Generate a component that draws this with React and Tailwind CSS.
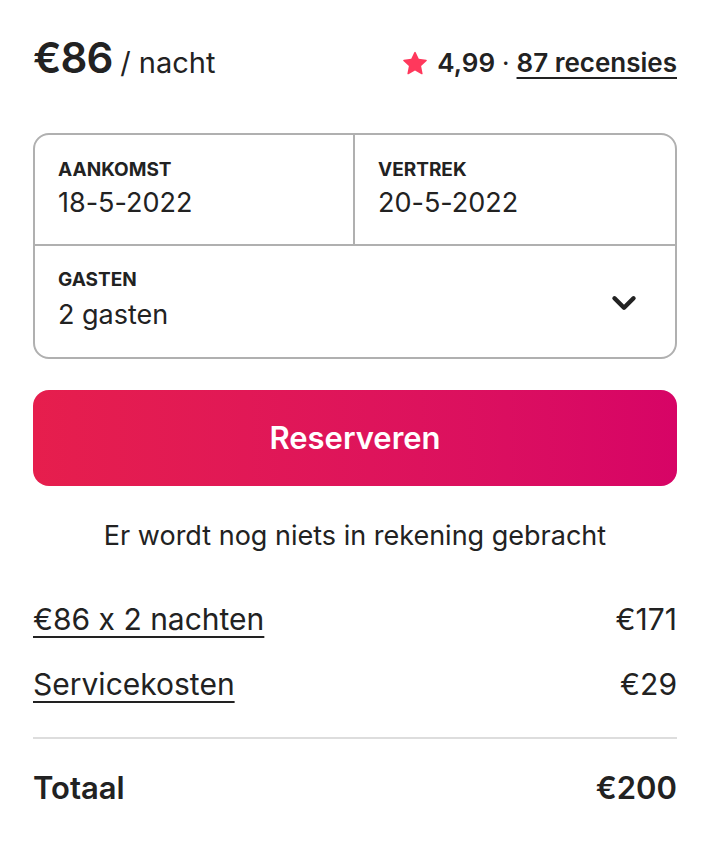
import { ChevronDown } from "lucide-react"

function Star() {
  return (
    <svg viewBox="0 0 32 32" className="w-[24px] h-[24px]" fill="#ff385c">
      <path d="M15.094 1.579l-4.124 8.885-9.86 1.27a1 1 0 0 0-.542 1.736l7.293 6.565-1.965 9.852a1 1 0 0 0 1.483 1.061L16 25.951l8.625 4.997a1 1 0 0 0 1.482-1.06l-1.965-9.853 7.293-6.565a1 1 0 0 0-.541-1.735l-9.86-1.271-4.127-8.885a1 1 0 0 0-1.814 0z" />
    </svg>
  )
}

export default function App() {
  return (
    <div className="min-h-screen bg-white text-[#222222] px-[33px] pt-[26px] [font-feature-settings:'calt'_0]" style={{ fontFamily: "Inter, 'Noto Sans', sans-serif" }}>

      {/* PRIJS + RATING */}
      <div className="flex justify-between items-baseline h-[62px]">
        <div className="flex items-baseline">
          <span className="text-[42px] font-semibold tracking-[-1px]">€86</span>
          <span className="text-[29px] ml-[8px]">/ nacht</span>
        </div>
        <div className="flex items-center text-[26px] self-center mt-[11px]">
          <Star />
          <span className="font-semibold ml-[10px]">4,99</span>
          <span className="mx-[7px]">·</span>
          <span className="font-semibold underline underline-offset-[5px] decoration-2">87 recensies</span>
        </div>
      </div>

      {/* DATUMS + GASTEN */}
      <div className="mt-[45px] border-2 border-[#b0b0b0] rounded-[16px] overflow-hidden">
        <div className="grid grid-cols-2 h-[111px] border-b-2 border-[#b0b0b0]">
          <div className="px-[23px] pt-[21px] border-r-2 border-[#b0b0b0]">
            <div className="text-[19px] font-bold uppercase">Aankomst</div>
            <div className="text-[27px] -mt-[2px]">18-5-2022</div>
          </div>
          <div className="px-[23px] pt-[21px]">
            <div className="text-[19px] font-bold uppercase">Vertrek</div>
            <div className="text-[27px] -mt-[2px]">20-5-2022</div>
          </div>
        </div>
        <div className="flex items-center justify-between h-[111px] pl-[23px] pr-[32px]">
          <div className="-mt-[2px]">
            <div className="text-[19px] font-bold uppercase">Gasten</div>
            <div className="text-[27px] mt-[1px]">2 gasten</div>
          </div>
          <ChevronDown size={38} strokeWidth={2.8} className="mt-[2px]" />
        </div>
      </div>

      {/* KNOP */}
      <button className="mt-[31px] w-full h-[96px] rounded-[16px] bg-gradient-to-r from-[#e61e4d] to-[#d70466] text-white text-[31px] font-semibold">
        Reserveren
      </button>

      <p className="text-center text-[27px] mt-[30px]">Er wordt nog niets in rekening gebracht</p>

      {/* KOSTEN */}
      <div className="mt-[40px] space-y-[20px] text-[30px]">
        <div className="flex justify-between">
          <span className="underline underline-offset-[6px] decoration-[1.5px]">€86 x 2 nachten</span>
          <span>€171</span>
        </div>
        <div className="flex justify-between">
          <span className="underline underline-offset-[6px] decoration-[1.5px]">Servicekosten</span>
          <span>€29</span>
        </div>
      </div>

      <div className="mt-[30px] border-t-2 border-[#dddddd]"></div>

      <div className="flex justify-between mt-[26px] text-[31px] font-semibold">
        <span>Totaal</span>
        <span>€200</span>
      </div>

    </div>
  )
}
